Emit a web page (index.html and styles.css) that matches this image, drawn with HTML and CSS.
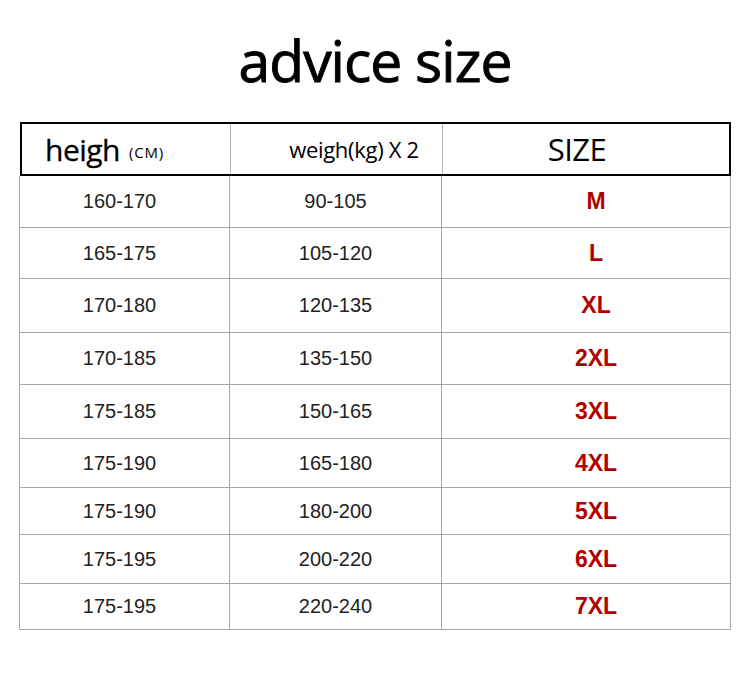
FILE: index.html
```html
<!DOCTYPE html>
<html>
<head>
<meta charset="utf-8">
<link rel="stylesheet" href="styles.css">
</head>
<body>
<div class="page">
  <h1 class="title">advice size</h1>
  <div class="chart">
    <div class="head">
      <div class="hcell h1">heigh <span class="unit">(CM)</span></div>
      <div class="hcell h2">weigh(kg) X 2</div>
      <div class="hcell h3">SIZE</div>
    </div>
    <div class="body">
      <div class="row"><div class="c c1">160-170</div><div class="c c2">90-105</div><div class="c c3">M</div></div>
      <div class="row"><div class="c c1">165-175</div><div class="c c2">105-120</div><div class="c c3">L</div></div>
      <div class="row"><div class="c c1">170-180</div><div class="c c2">120-135</div><div class="c c3">XL</div></div>
      <div class="row"><div class="c c1">170-185</div><div class="c c2">135-150</div><div class="c c3">2XL</div></div>
      <div class="row"><div class="c c1">175-185</div><div class="c c2">150-165</div><div class="c c3">3XL</div></div>
      <div class="row"><div class="c c1">175-190</div><div class="c c2">165-180</div><div class="c c3">4XL</div></div>
      <div class="row"><div class="c c1">175-190</div><div class="c c2">180-200</div><div class="c c3">5XL</div></div>
      <div class="row"><div class="c c1">175-195</div><div class="c c2">200-220</div><div class="c c3">6XL</div></div>
      <div class="row"><div class="c c1">175-195</div><div class="c c2">220-240</div><div class="c c3">7XL</div></div>
    </div>
  </div>
</div>
</body>
</html>
```

FILE: styles.css
```css
html, body {
  margin: 0;
  padding: 0;
  background: #fff;
}
.page {
  width: 750px;
  height: 677px;
  padding: 0 0 0 19px;
  box-sizing: border-box;
}
.title {
  margin: 0;
  height: 122px;
  box-sizing: border-box;
  padding-top: 22px;
  padding-right: 19px;
  text-align: center;
  font-family: "Open Sans", sans-serif;
  font-weight: 400;
  font-size: 57px;
  line-height: 76px;
  letter-spacing: -1px;
  color: #000;
  -webkit-text-stroke: 0.9px #000;
}
.chart {
  width: 712px;
}
.head {
  display: grid;
  grid-template-columns: 208px 213px 1fr;
  height: 54px;
  border: 2px solid #000;
  box-sizing: border-box;
  margin-left: 1px;
  width: 711px;
}
.hcell {
  display: flex;
  align-items: center;
  font-family: "Open Sans", sans-serif;
  color: #000;
}
.h1 {
  font-size: 30px;
  padding-left: 23px;
  letter-spacing: -0.5px;
  -webkit-text-stroke: 0.3px #000;
}
.unit {
  font-size: 15px;
  margin-left: 9px;
  margin-top: 6px;
  letter-spacing: 0.8px;
  -webkit-text-stroke: 0;
}
.h2 {
  border-left: 1px solid #b4b4b4;
  border-right: 1px solid #b4b4b4;
  justify-content: center;
  font-size: 22px;
  padding-left: 35px;
  letter-spacing: -0.3px;
}
.h3 {
  justify-content: center;
  font-size: 31px;
  padding-right: 18px;
  letter-spacing: -0.5px;
}
.body {
  border-left: 1px solid #a8a8a8;
  border-right: 1px solid #a8a8a8;
  width: 712px;
  box-sizing: border-box;
}
.row {
  display: grid;
  grid-template-columns: 209px 213px 1fr;
  border-bottom: 1px solid #a8a8a8;
  height: 52px;
  box-sizing: border-box;
}
.row:nth-child(1) { height: 52px; }
.row:nth-child(2) { height: 51px; }
.row:nth-child(3) { height: 54px; }
.row:nth-child(4) { height: 52px; }
.row:nth-child(5) { height: 54px; }
.row:nth-child(6) { height: 49px; }
.row:nth-child(7) { height: 47px; }
.row:nth-child(8) { height: 49px; }
.row:nth-child(9) { height: 46px; }
.c {
  display: flex;
  align-items: center;
  justify-content: center;
  font-family: "Liberation Sans", Arial, sans-serif;
  font-size: 20px;
  color: #222;
}
.c1 {
  padding-right: 10px;
}
.c2 {
  border-left: 1px solid #a8a8a8;
  border-right: 1px solid #a8a8a8;
}
.c3 {
  font-weight: 700;
  color: #b00000;
  font-size: 23px;
  padding-left: 20px;
}
```
